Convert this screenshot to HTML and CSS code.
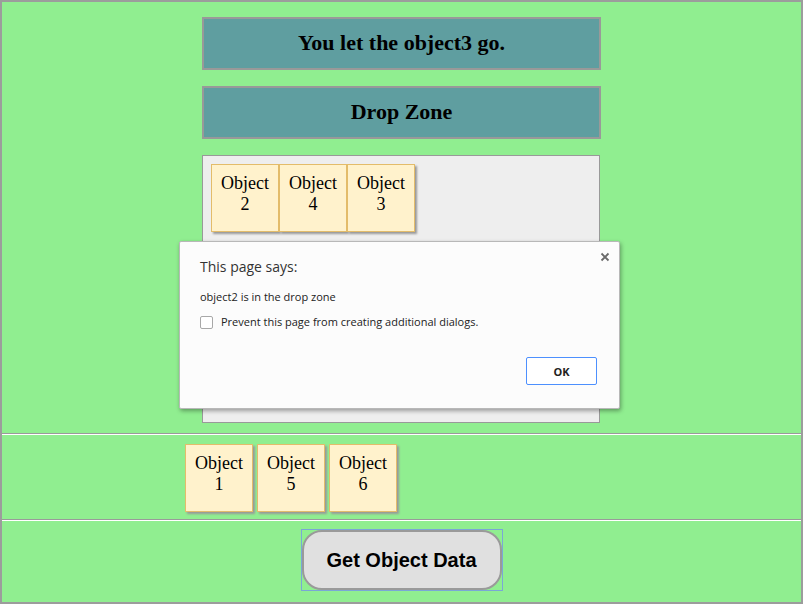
FILE: index.html
```html
<!DOCTYPE html>
<html>
<head>
<meta charset="utf-8">
<link rel="stylesheet" href="styles.css">
</head>
<body>
<div class="frame">
  <div class="column">
    <h2 class="banner">You let the object3 go.</h2>
    <h2 class="banner">Drop Zone</h2>
    <div class="dropzone">
      <div class="obj">Object<br>2</div>
      <div class="obj">Object<br>4</div>
      <div class="obj">Object<br>3</div>
    </div>
  </div>
  <div class="rule"></div>
  <div class="tray">
    <div class="obj">Object<br>1</div>
    <div class="obj">Object<br>5</div>
    <div class="obj">Object<br>6</div>
  </div>
  <div class="rule"></div>
  <div class="actions">
    <span class="focusring"><button class="getdata">Get Object Data</button></span>
  </div>

  <div class="dialog">
    <div class="dlg-close">
      <svg width="10" height="10" viewBox="0 0 10 10"><path d="M1.5 1.5 L8.5 8.5 M8.5 1.5 L1.5 8.5" stroke="#6a6a6a" stroke-width="1.8" fill="none"/></svg>
    </div>
    <div class="dlg-title">This page says:</div>
    <div class="dlg-msg">object2 is in the drop zone</div>
    <label class="dlg-check"><span class="box"></span>Prevent this page from creating additional dialogs.</label>
    <div class="dlg-buttons"><span class="ok">OK</span></div>
  </div>
</div>
</body>
</html>
```

FILE: styles.css
```css
html, body {
  margin: 0;
  padding: 0;
}
body {
  width: 803px;
  height: 604px;
  overflow: hidden;
  font-family: "Liberation Serif", "Times New Roman", serif;
}
.frame {
  position: relative;
  box-sizing: border-box;
  width: 803px;
  height: 604px;
  border: 2px solid #9c9c9c;
  background: #90ee90;
}
.column {
  width: 399px;
  margin: 0 auto;
  padding-top: 15px;
}
.banner {
  box-sizing: border-box;
  height: 53px;
  margin: 0 0 16px 0;
  background: #5f9ea0;
  border: 2px solid #999;
  text-align: center;
  font-size: 22px;
  font-weight: bold;
  line-height: 47px;
  color: #000;
}
.dropzone {
  box-sizing: border-box;
  width: 398px;
  height: 268px;
  background: #eeeeee;
  border: 1px solid #999;
  padding: 8px;
  display: flex;
  align-items: flex-start;
  margin-bottom: 10px;
}
.obj {
  box-sizing: border-box;
  width: 68px;
  height: 68px;
  background: #fff2cc;
  border: 1px solid #e3bc6a;
  box-shadow: 2px 2px 2px #999;
  text-align: center;
  font-size: 18px;
  line-height: 21px;
  padding-top: 8px;
  color: #000;
}
.rule {
  height: 0;
  border-top: 1px solid #9a9a9a;
  border-bottom: 1px solid #ffffff;
}
.tray {
  display: flex;
  gap: 4px;
  padding: 9px 0 8px 183px;
  height: 67px;
}
.actions {
  display: flex;
  justify-content: center;
  padding-top: 8px;
}
.focusring {
  display: flex;
  border: 1px solid #7aa7d6;
}
.getdata {
  box-sizing: border-box;
  width: 200px;
  height: 60px;
  margin: 0;
  border: 2px solid #9a9a9a;
  border-radius: 20px;
  background: #e0e0e0;
  font-family: "Liberation Sans", Arial, sans-serif;
  font-size: 20px;
  font-weight: bold;
  color: #000;
  outline: none;
}
.dialog {
  position: absolute;
  left: 177px;
  top: 239px;
  box-sizing: border-box;
  width: 441px;
  height: 168px;
  background: #fcfcfc;
  border: 1px solid #b8b8b8;
  border-radius: 2px;
  box-shadow: 1px 2px 4px rgba(0,0,0,0.35);
  font-family: "Open Sans", "Noto Sans", sans-serif;
  color: #333;
  padding: 14px 20px 0 20px;
}
.dlg-close {
  position: absolute;
  right: 9px;
  top: 10px;
  width: 10px;
  height: 10px;
  display: flex;
}
.dlg-title {
  font-size: 14px;
  line-height: 22px;
  color: #333;
}
.dlg-msg {
  font-size: 11px;
  line-height: 16px;
  margin-top: 11px;
  color: #222;
}
.dlg-check {
  display: flex;
  align-items: center;
  font-size: 11px;
  line-height: 16px;
  margin-top: 9px;
  color: #222;
}
.dlg-check .box {
  box-sizing: border-box;
  width: 13px;
  height: 13px;
  border: 1px solid #a8a8a8;
  border-radius: 2px;
  background: #fff;
  margin-right: 8px;
}
.dlg-buttons {
  display: flex;
  justify-content: flex-end;
  margin-top: 27px;
  padding-right: 2px;
}
.ok {
  box-sizing: border-box;
  width: 71px;
  height: 28px;
  border: 1px solid #4d90fe;
  border-radius: 2px;
  background: #fff;
  font-size: 11px;
  font-weight: bold;
  color: #222;
  display: flex;
  align-items: center;
  justify-content: center;
}
```
